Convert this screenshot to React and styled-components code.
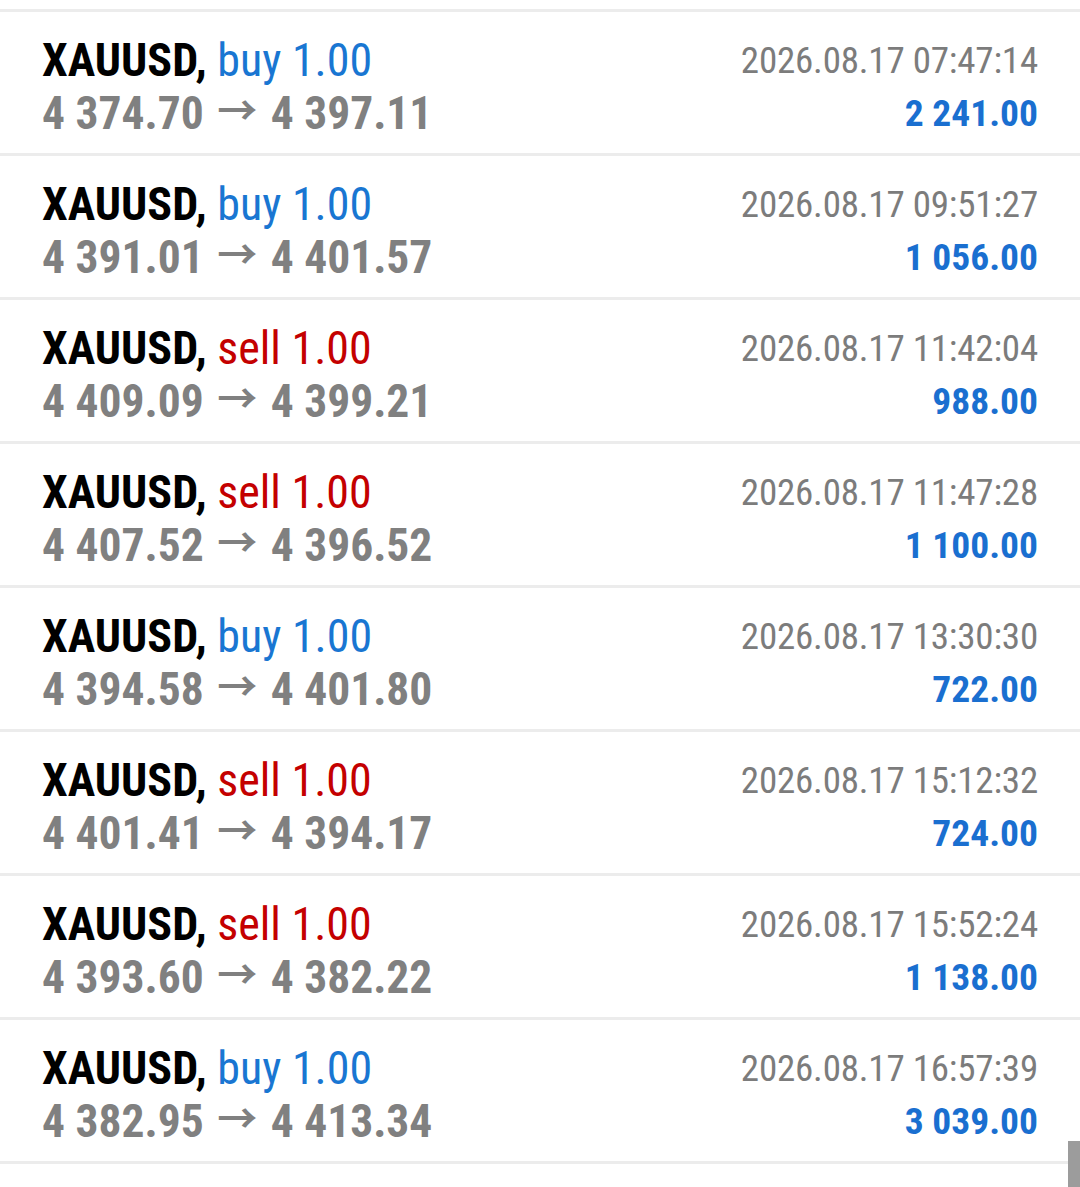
import React from "react";
import styled, { createGlobalStyle } from "styled-components";

const Global = createGlobalStyle`
  html, body { margin: 0; padding: 0; background: #fff; }
  body { font-family: "Roboto Condensed", Roboto, "Liberation Sans", sans-serif; overflow: hidden; }
`;

const trades = [
  ["buy", "4 374.70", "4 397.11", "2026.08.17 07:47:14", "2 241.00"],
  ["buy", "4 391.01", "4 401.57", "2026.08.17 09:51:27", "1 056.00"],
  ["sell", "4 409.09", "4 399.21", "2026.08.17 11:42:04", "988.00"],
  ["sell", "4 407.52", "4 396.52", "2026.08.17 11:47:28", "1 100.00"],
  ["buy", "4 394.58", "4 401.80", "2026.08.17 13:30:30", "722.00"],
  ["sell", "4 401.41", "4 394.17", "2026.08.17 15:12:32", "724.00"],
  ["sell", "4 393.60", "4 382.22", "2026.08.17 15:52:24", "1 138.00"],
  ["buy", "4 382.95", "4 413.34", "2026.08.17 16:57:39", "3 039.00"],
];

const Page = styled.div`
  position: relative;
  height: 1187px;
  padding-top: 9px;
  box-sizing: border-box;
  overflow: hidden;
`;

const List = styled.div`
  border-top: 3px solid #ececec;
`;

const Row = styled.div`
  height: 141px;
  border-bottom: 3px solid #ececec;
  display: flex;
  justify-content: space-between;
  padding: 0 42px;
  box-sizing: content-box;
`;

const Col = styled.div`
  display: flex;
  flex-direction: column;
  align-items: ${(p) => (p.$right ? "flex-end" : "flex-start")};
  padding-top: ${(p) => (p.$right ? "23px" : "22px")};
`;

const Line = styled.div`
  font-size: ${(p) => p.$size}px;
  line-height: ${(p) => p.$lh}px;
  font-weight: ${(p) => (p.$bold ? 700 : 400)};
  letter-spacing: ${(p) => p.$ls || 0}px;
  color: ${(p) => p.$color};
  font-stretch: 75%;
  white-space: nowrap;
`;

const Symbol = styled.span`
  color: #000;
  font-weight: 700;
`;

const Side = styled.span`
  color: ${(p) => (p.$sell ? "#c40000" : "#1976d2")};
`;

const Arrow = styled.span`
  display: inline-block;
  font-family: "Noto Sans CJK JP", "DejaVu Sans", sans-serif;
  font-weight: 700;
  font-size: 40px;
  line-height: 0;
  margin: 0 3px;
  position: relative;
  top: -4px;
`;

const Scroll = styled.div`
  position: absolute;
  right: 0;
  top: 1141px;
  width: 12px;
  height: 60px;
  background: #9c9c9c;
`;

export default function App() {
  return (
    <Page>
      <Global />
      <List>
        {trades.map((t, i) => (
          <Row key={i}>
            <Col>
              <Line $size={46} $lh={53} $color="#000">
                <Symbol>XAUUSD,</Symbol>{" "}
                <Side $sell={t[0] === "sell"}>{t[0]} 1.00</Side>
              </Line>
              <Line $size={45.5} $lh={53} $bold $color="#808080">
                {t[1]} <Arrow>→</Arrow> {t[2]}
              </Line>
            </Col>
            <Col $right>
              <Line $size={37} $lh={52} $ls={-0.2} $color="#7c7c7c">{t[3]}</Line>
              <Line $size={37.5} $lh={52} $bold $color="#1a6fd0">{t[4]}</Line>
            </Col>
          </Row>
        ))}
      </List>
      <Scroll />
    </Page>
  );
}
